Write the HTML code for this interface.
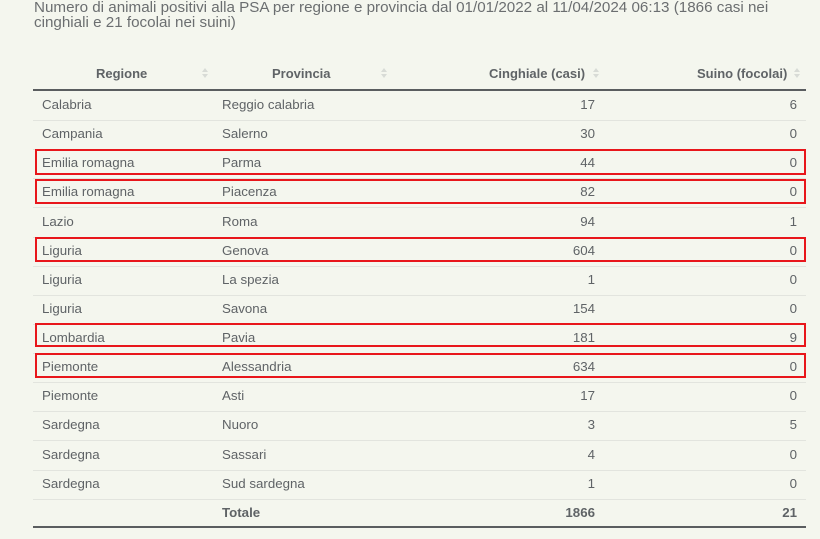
<!DOCTYPE html>
<html><head><meta charset="utf-8"><style>
body{margin:0;width:820px;height:539px;background:#f4f6ee;font-family:"Liberation Sans",sans-serif;color:#5f6366;position:relative;overflow:hidden}
.t{position:absolute;left:34px;top:1px;font-size:15.2px;line-height:14.5px;color:#6b6e70;width:780px}
.h{position:absolute;top:66px;font-size:13px;font-weight:bold;color:#5f6366}
.s{position:absolute;top:66px;width:6px;height:14px}
.s:before,.s:after{content:"";position:absolute;left:0;border-left:3px solid transparent;border-right:3px solid transparent}
.s:before{top:2px;border-bottom:4px solid #d8dbd6}
.s:after{top:8px;border-top:4px solid #d8dbd6}
.hl{position:absolute;left:33px;width:773px;top:89px;height:2px;background:#5a5d5f}
.r{position:absolute;left:33px;width:773px;height:29px;border-bottom:1px solid #e2e4de;font-size:13.3px}
.r span{position:absolute;top:6px}
.a{left:9px}.b{left:189px}.c{right:211px}.d{right:9px}
.box{position:absolute;left:35px;width:767px;border:2px solid #e8161b}
.bl{position:absolute;left:33px;width:773px;top:526px;height:2px;background:#5a5d5f}
</style></head><body>
<div class="t">Numero di animali positivi alla PSA per regione e provincia dal 01/01/2022 al 11/04/2024 06:13 (1866 casi nei cinghiali e 21 focolai nei suini)</div>
<div class="h" style="left:96px">Regione</div><div class="s" style="left:202px"></div>
<div class="h" style="left:272px">Provincia</div><div class="s" style="left:381px"></div>
<div class="h" style="left:489px">Cinghiale (casi)</div><div class="s" style="left:593px"></div>
<div class="h" style="left:697px">Suino (focolai)</div><div class="s" style="left:794px"></div>
<div class="hl"></div>
<div class="r" style="top:91px"><span class="a">Calabria</span><span class="b">Reggio calabria</span><span class="c">17</span><span class="d">6</span></div>
<div class="r" style="top:120px"><span class="a">Campania</span><span class="b">Salerno</span><span class="c">30</span><span class="d">0</span></div>
<div class="r" style="top:149px"><span class="a">Emilia romagna</span><span class="b">Parma</span><span class="c">44</span><span class="d">0</span></div>
<div class="r" style="top:178px"><span class="a">Emilia romagna</span><span class="b">Piacenza</span><span class="c">82</span><span class="d">0</span></div>
<div class="r" style="top:208px"><span class="a">Lazio</span><span class="b">Roma</span><span class="c">94</span><span class="d">1</span></div>
<div class="r" style="top:237px"><span class="a">Liguria</span><span class="b">Genova</span><span class="c">604</span><span class="d">0</span></div>
<div class="r" style="top:266px"><span class="a">Liguria</span><span class="b">La spezia</span><span class="c">1</span><span class="d">0</span></div>
<div class="r" style="top:295px"><span class="a">Liguria</span><span class="b">Savona</span><span class="c">154</span><span class="d">0</span></div>
<div class="r" style="top:324px"><span class="a">Lombardia</span><span class="b">Pavia</span><span class="c">181</span><span class="d">9</span></div>
<div class="r" style="top:353px"><span class="a">Piemonte</span><span class="b">Alessandria</span><span class="c">634</span><span class="d">0</span></div>
<div class="r" style="top:382px"><span class="a">Piemonte</span><span class="b">Asti</span><span class="c">17</span><span class="d">0</span></div>
<div class="r" style="top:411px"><span class="a">Sardegna</span><span class="b">Nuoro</span><span class="c">3</span><span class="d">5</span></div>
<div class="r" style="top:441px"><span class="a">Sardegna</span><span class="b">Sassari</span><span class="c">4</span><span class="d">0</span></div>
<div class="r" style="top:470px"><span class="a">Sardegna</span><span class="b">Sud sardegna</span><span class="c">1</span><span class="d">0</span></div>
<div class="r" style="top:499px;border:none;font-weight:bold"><span class="b">Totale</span><span class="c">1866</span><span class="d">21</span></div>
<div class="bl"></div>
<div class="box" style="top:149px;height:22px"></div>
<div class="box" style="top:179px;height:21px"></div>
<div class="box" style="top:237px;height:21px"></div>
<div class="box" style="top:323px;height:20px"></div>
<div class="box" style="top:353px;height:21px"></div>
</body></html>
